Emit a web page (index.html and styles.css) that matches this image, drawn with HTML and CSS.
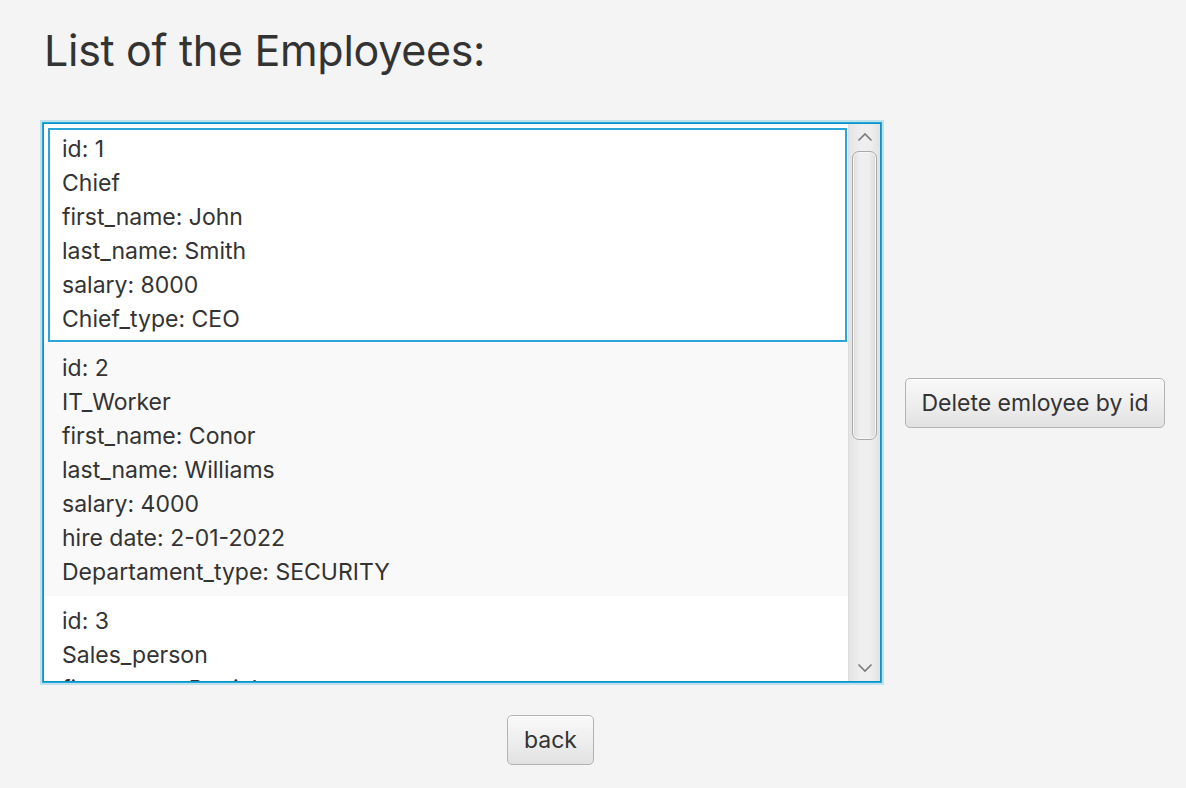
FILE: index.html
```html
<!DOCTYPE html>
<html>
<head>
<meta charset="utf-8">
<title>Employees</title>
<link rel="stylesheet" href="styles.css">
</head>
<body>
<main class="page">
  <h1 class="title">List of the Employees:</h1>
  <div class="row">
    <div class="list">
      <div class="cells">
        <div class="cell focused">
          <div>id: 1</div>
          <div>Chief</div>
          <div>first_name: John</div>
          <div>last_name: Smith</div>
          <div>salary: 8000</div>
          <div>Chief_type: CEO</div>
        </div>
        <div class="cell odd">
          <div>id: 2</div>
          <div>IT_Worker</div>
          <div>first_name: Conor</div>
          <div>last_name: Williams</div>
          <div>salary: 4000</div>
          <div>hire date: 2-01-2022</div>
          <div>Departament_type: SECURITY</div>
        </div>
        <div class="cell">
          <div>id: 3</div>
          <div>Sales_person</div>
          <div>first_name: Patrick</div>
        </div>
      </div>
      <div class="scrollbar">
        <div class="arrow">
          <svg width="16" height="10" viewBox="0 0 16 10"><path d="M1.5 8.5 L8 2 L14.5 8.5" fill="none" stroke="#7a7a7a" stroke-width="1.6"/></svg>
        </div>
        <div class="track">
          <div class="thumb"></div>
        </div>
        <div class="arrow">
          <svg width="16" height="10" viewBox="0 0 16 10"><path d="M1.5 1.5 L8 8 L14.5 1.5" fill="none" stroke="#7a7a7a" stroke-width="1.6"/></svg>
        </div>
      </div>
    </div>
    <button class="btn delete">Delete emloyee by id</button>
  </div>
  <div class="footer">
    <button class="btn back">back</button>
  </div>
</main>
</body>
</html>
```

FILE: styles.css
```css
html, body {
  margin: 0;
  padding: 0;
  background: #f4f4f4;
}

body {
  font-family: Inter, Roboto, "Liberation Sans", sans-serif;
  color: #333333;
}

.page {
  padding-left: 43px;
  width: 1143px;
}

.title {
  margin: 0;
  padding-top: 25px;
  padding-left: 1px;
  font-size: 43px;
  font-weight: 400;
  line-height: 50px;
  color: #333333;
  letter-spacing: -0.3px;
}

.row {
  margin-top: 48px;
  display: flex;
  align-items: center;
  gap: 24px;
}

.list {
  width: 838px;
  height: 559px;
  box-sizing: border-box;
  border: 1px solid #0a93c6;
  box-shadow: 0 0 0 1px #2aa6d6, 0 0 0 3px rgba(3, 158, 211, 0.22);
  background: #ffffff;
  display: flex;
  overflow: hidden;
}

.cells {
  flex: 1;
  overflow: hidden;
}

.cell {
  position: relative;
  padding: 8px 10px 7px 18px;
  font-size: 23px;
  line-height: 34px;
  background: #ffffff;
  letter-spacing: 0;
}

.cell.odd {
  background: #f9f9f9;
}

.cell.focused::after {
  content: "";
  position: absolute;
  top: 4px;
  left: 4px;
  right: 1px;
  bottom: 1px;
  border: 2px solid #2aa6d6;
}

.scrollbar {
  width: 31px;
  display: flex;
  flex-direction: column;
  background: linear-gradient(to right, #e4e4e4, #efefef 40%, #eeeeee 70%, #e2e2e2);
  border-left: 1px solid #dcdcdc;
}

.arrow {
  height: 26px;
  display: flex;
  align-items: center;
  justify-content: center;
}

.track {
  flex: 1;
  padding: 1px 3px;
}

.thumb {
  height: 289px;
  box-sizing: border-box;
  border: 1px solid #a9a9a9;
  border-radius: 7px;
  background: linear-gradient(to right, #dcdcdc, #f0f0f0 30%, #eeeeee 70%, #dadada);
  box-shadow: inset 0 0 0 1px #f7f7f7;
}

.btn {
  height: 50px;
  box-sizing: border-box;
  border: 1px solid #b3b3b3;
  border-radius: 5px;
  background: linear-gradient(to bottom, #f9f9f9, #ececec 60%, #e1e1e1);
  box-shadow: inset 0 1px 0 #ffffff;
  font-family: Inter, Roboto, "Liberation Sans", sans-serif;
  font-size: 23px;
  color: #333333;
  padding: 0 6px;
  letter-spacing: 0;
}

.delete {
  width: 260px;
}

.back {
  width: 87px;
}

.footer {
  margin-top: 33px;
  padding-left: 464px;
}
```
